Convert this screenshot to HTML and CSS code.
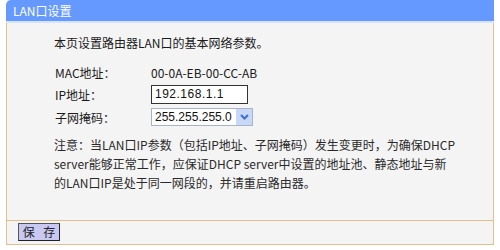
FILE: index.html
```html
<!DOCTYPE html>
<html lang="zh-CN">
<head>
	<meta charset="UTF-8">
	<title>LAN口设置</title>
	<link rel="stylesheet" href="styles.css">
</head>
<body>
	<div class="panel">
		<div class="panel-title">LAN口设置</div>
		<div class="panel-body">
			<p class="intro">本页设置路由器LAN口的基本网络参数。</p>
			<div class="fields">
				<span class="label">MAC地址：</span>
				<span class="value">00-0A-EB-00-CC-AB</span>

				<span class="label">IP地址：</span>
				<span class="value"><input class="ip-input" type="text" value="192.168.1.1"></span>

				<span class="label">子网掩码：</span>
				<span class="value">
					<!-- 用div模拟下拉框，避免原生select样式差异 -->
					<span class="fake-select">
						<span class="fake-select-text">255.255.255.0</span>
						<span class="fake-select-btn">
							<svg width="9" height="6" viewBox="0 0 9 6"><path d="M1 1 L4.5 4.5 L8 1" fill="none" stroke="#3a6fd8" stroke-width="2"/></svg>
						</span>
					</span>
				</span>
			</div>
			<p class="note">注意：当LAN口IP参数（包括IP地址、子网掩码）发生变更时，为确保DHCP<br>server能够正常工作，应保证DHCP server中设置的地址池、静态地址与新<br>的LAN口IP是处于同一网段的，并请重启路由器。</p>
		</div>
		<div class="panel-foot">
			<button class="btn-save" type="button">保 存</button>
		</div>
	</div>
</body>
</html>
```

FILE: styles.css
```css
body {
	margin: 0;
	padding: 0;
	background-color: #fff;
	font-family: "Noto Sans CJK SC", "Liberation Sans", sans-serif;
	font-size: 12px;
	color: #1a1a1a;
}
p {
	margin: 0;
}

/*外框*/
.panel {
	margin: 0 6px;
}
.panel-title {
	height: 21px;
	line-height: 21px;
	padding-left: 7px;
	color: #fff;
	background-color: #6699ff;
	border-radius: 5px 0 0 0;
	border-bottom: 2px solid #d6e3fb;
}
.panel-body {
	padding: 10px 0 28px 47px;
	background-color: #f4f4f4;
	border-left: 1px solid #e3bf8e;
	border-right: 1px solid #e3bf8e;
	border-bottom: 1px solid #e3bf8e;
}

.intro {
	line-height: 20px;
}

/*参数表格*/
.fields {
	display: grid;
	grid-template-columns: 96px auto;
	grid-template-rows: 20px 22px 22px;
	row-gap: 1px;
	align-items: center;
	margin-top: 9px;
	padding-left: 1px;
}
.fields .value {
	display: flex;
	align-items: center;
}
.ip-input {
	box-sizing: border-box;
	width: 97px;
	height: 19px;
	margin: 0;
	padding: 0 3px;
	border: 1px solid #333;
	background-color: #fff;
	font-family: "Liberation Sans", sans-serif;
	font-size: 12px;
	letter-spacing: 0.5px;
	color: #111;
	outline: none;
}
.fake-select {
	display: flex;
	align-items: center;
	box-sizing: border-box;
	width: 102px;
	height: 18px;
	border: 1px solid #a5b3cc;
	background-color: #fff;
}
.fake-select-text {
	flex: 1;
	padding-left: 3px;
	font-family: "Liberation Sans", sans-serif;
	font-size: 12px;
	color: #111;
}
.fake-select-btn {
	display: flex;
	align-items: center;
	justify-content: center;
	width: 16px;
	height: 16px;
	background-color: #c9d8f6;
}

.note {
	margin-top: 7px;
	line-height: 19px;
	white-space: nowrap;
	color: #2a2a2a;
}

/*底部按钮区*/
.panel-foot {
	height: 21px;
	padding: 2px 0 0 11px;
	background-color: #f4f4f4;
	border-left: 1px solid #e3bf8e;
	border-right: 1px solid #e3bf8e;
	border-bottom: 1px solid #e3bf8e;
}
.btn-save {
	box-sizing: border-box;
	width: 42px;
	height: 18px;
	margin: 0;
	padding: 0;
	border: 1px solid #555;
	border-right-color: #222;
	border-bottom-color: #222;
	background-color: #c8c8f2;
	font-family: "Noto Sans CJK SC", sans-serif;
	font-size: 12px;
	line-height: 16px;
	word-spacing: 6px;
	color: #222;
}
```
